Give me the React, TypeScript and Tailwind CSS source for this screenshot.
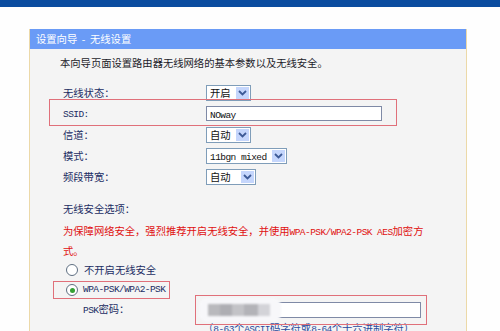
import type { ReactNode } from "react";

// ASCII in the old router UI is half-width (SimSun), so squeeze a mono face to match
function Mono({ children }: { children: ReactNode }) {
  return (
    <span className="font-['Liberation_Mono',monospace] text-[9.5px] tracking-[-0.55px]">
      {children}
    </span>
  );
}

function Chevron() {
  return (
    <svg width="9" height="6" viewBox="0 0 9 6">
      <path d="M1 1 L4.5 4.5 L8 1" fill="none" stroke="#3d5a96" strokeWidth="1.8" />
    </svg>
  );
}

function Select({ value, width, mono }: { value: string; width: string; mono?: boolean }) {
  return (
    <div className={`flex h-[16px] items-stretch border border-[#7f9db9] bg-white ${width}`}>
      <span className="flex-1 pl-[3px] leading-[14px] text-[#111]">
        {mono ? <Mono>{value}</Mono> : value}
      </span>
      <span className="m-px flex w-[13px] items-center justify-center bg-[#c5d6fc]">
        <Chevron />
      </span>
    </div>
  );
}

function Radio({ checked }: { checked?: boolean }) {
  return (
    <span className="flex h-[12px] w-[12px] items-center justify-center rounded-full border border-[#5f6f82] bg-white">
      {checked && <span className="h-[5px] w-[5px] rounded-full bg-[#34a034]" />}
    </span>
  );
}

function Row({ label, children, boxed }: { label: ReactNode; children: ReactNode; boxed?: boolean }) {
  return (
    <div className="relative grid h-[21px] grid-cols-[143px_1fr] items-center pl-[3px]">
      <span className="text-[#1b2d63]">{label}</span>
      {children}
      {boxed && (
        <div className="absolute top-[-4px] bottom-[-2px] left-[-11px] w-[348px] border border-[#e0707a]" />
      )}
    </div>
  );
}

export default function App() {
  return (
    <div className="h-[331px] w-[500px] overflow-hidden bg-[#fefefe] font-['Noto_Sans_CJK_SC',sans-serif] text-[10.3px]">
      <div className="h-[7px] bg-[#0b4c9f]" />

      <div className="mt-[22px] ml-[29px] w-[438px] border-x border-[#ecd9a8]">
        <div className="h-[20px] bg-[#6a9bf6] pl-[6px] leading-[20px] text-white">
          设置向导 &nbsp;-&nbsp; 无线设置
        </div>

        <div className="h-[300px] bg-[#f4f4f4] pl-[30px]">
          <p className="pt-[7px] leading-[14px] text-[#1c1c2a]">
            本向导页面设置路由器无线网络的基本参数以及无线安全。
          </p>

          <div className="mt-[12px]">
            <Row label="无线状态：">
              <Select value="开启" width="w-[45px]" />
            </Row>
            <Row label={<Mono>SSID:</Mono>} boxed>
              <div className="h-[15px] w-[176px] border border-[#7f8aa6] bg-white pl-[3px] leading-[13px] text-[#111]">
                <Mono>NOway</Mono>
              </div>
            </Row>
            <Row label="信道：">
              <Select value="自动" width="w-[45px]" />
            </Row>
            <Row label="模式：">
              <Select value="11bgn mixed" width="w-[81px]" mono />
            </Row>
            <Row label="频段带宽：">
              <Select value="自动" width="w-[50px]" />
            </Row>
          </div>

          <p className="mt-[15px] pl-[3px] leading-[14px] text-[#1b2d63]">无线安全选项：</p>

          <p className="mt-[6px] pl-[3px] leading-[18px] text-[#e01010]">
            为保障网络安全，强烈推荐开启无线安全，并使用<Mono>WPA-PSK/WPA2-PSK AES</Mono>加密方
            <br />
            式。
          </p>

          <div className="flex h-[20px] items-center gap-[6px] pl-[6px] text-[#1b2d63]">
            <Radio />
            <span>不开启无线安全</span>
          </div>

          <div className="mt-px ml-[-7px] flex h-[18px] w-[117px] items-center gap-[5px] border border-[#e0707a] pl-[12px] text-[#1b2d63]">
            <Radio checked />
            <Mono>WPA-PSK/WPA2-PSK</Mono>
          </div>

          <div className="relative mt-[2px] grid h-[18px] grid-cols-[123px_1fr] items-center pl-[23px] text-[#1b2d63]">
            <span>
              <Mono>PSK</Mono>密码：
            </span>
            <div className="h-[16px] w-[215px] border border-[#7f8aa6] bg-white" />
            {/* blurred-out password */}
            <div className="absolute top-[-3px] left-[139px] flex h-[24px] w-[82px] items-center rounded-[8px] bg-[#f7f7fa] pl-[9px] blur-[1px]">
              <span className="h-[12px] w-[12px] bg-[#b9b9bd]" />
              <span className="h-[12px] w-[12px] bg-[#aeaeb3]" />
              <span className="h-[12px] w-[12px] bg-[#c3c3c7]" />
              <span className="h-[12px] w-[14px] bg-[#b3b3b8]" />
              <span className="h-[12px] w-[12px] bg-[#d3d3d8]" />
            </div>
            <div className="absolute top-[-6px] left-[135px] h-[30px] w-[232px] border border-[#e0707a]" />
          </div>

          <p className="mt-[2px] pl-[143px] leading-[14px] text-[#2a4a9c]">
            （<Mono>8-63</Mono>个<Mono>ASCII</Mono>码字符或<Mono>8-64</Mono>个十六进制字符）
          </p>
        </div>
      </div>
    </div>
  );
}
